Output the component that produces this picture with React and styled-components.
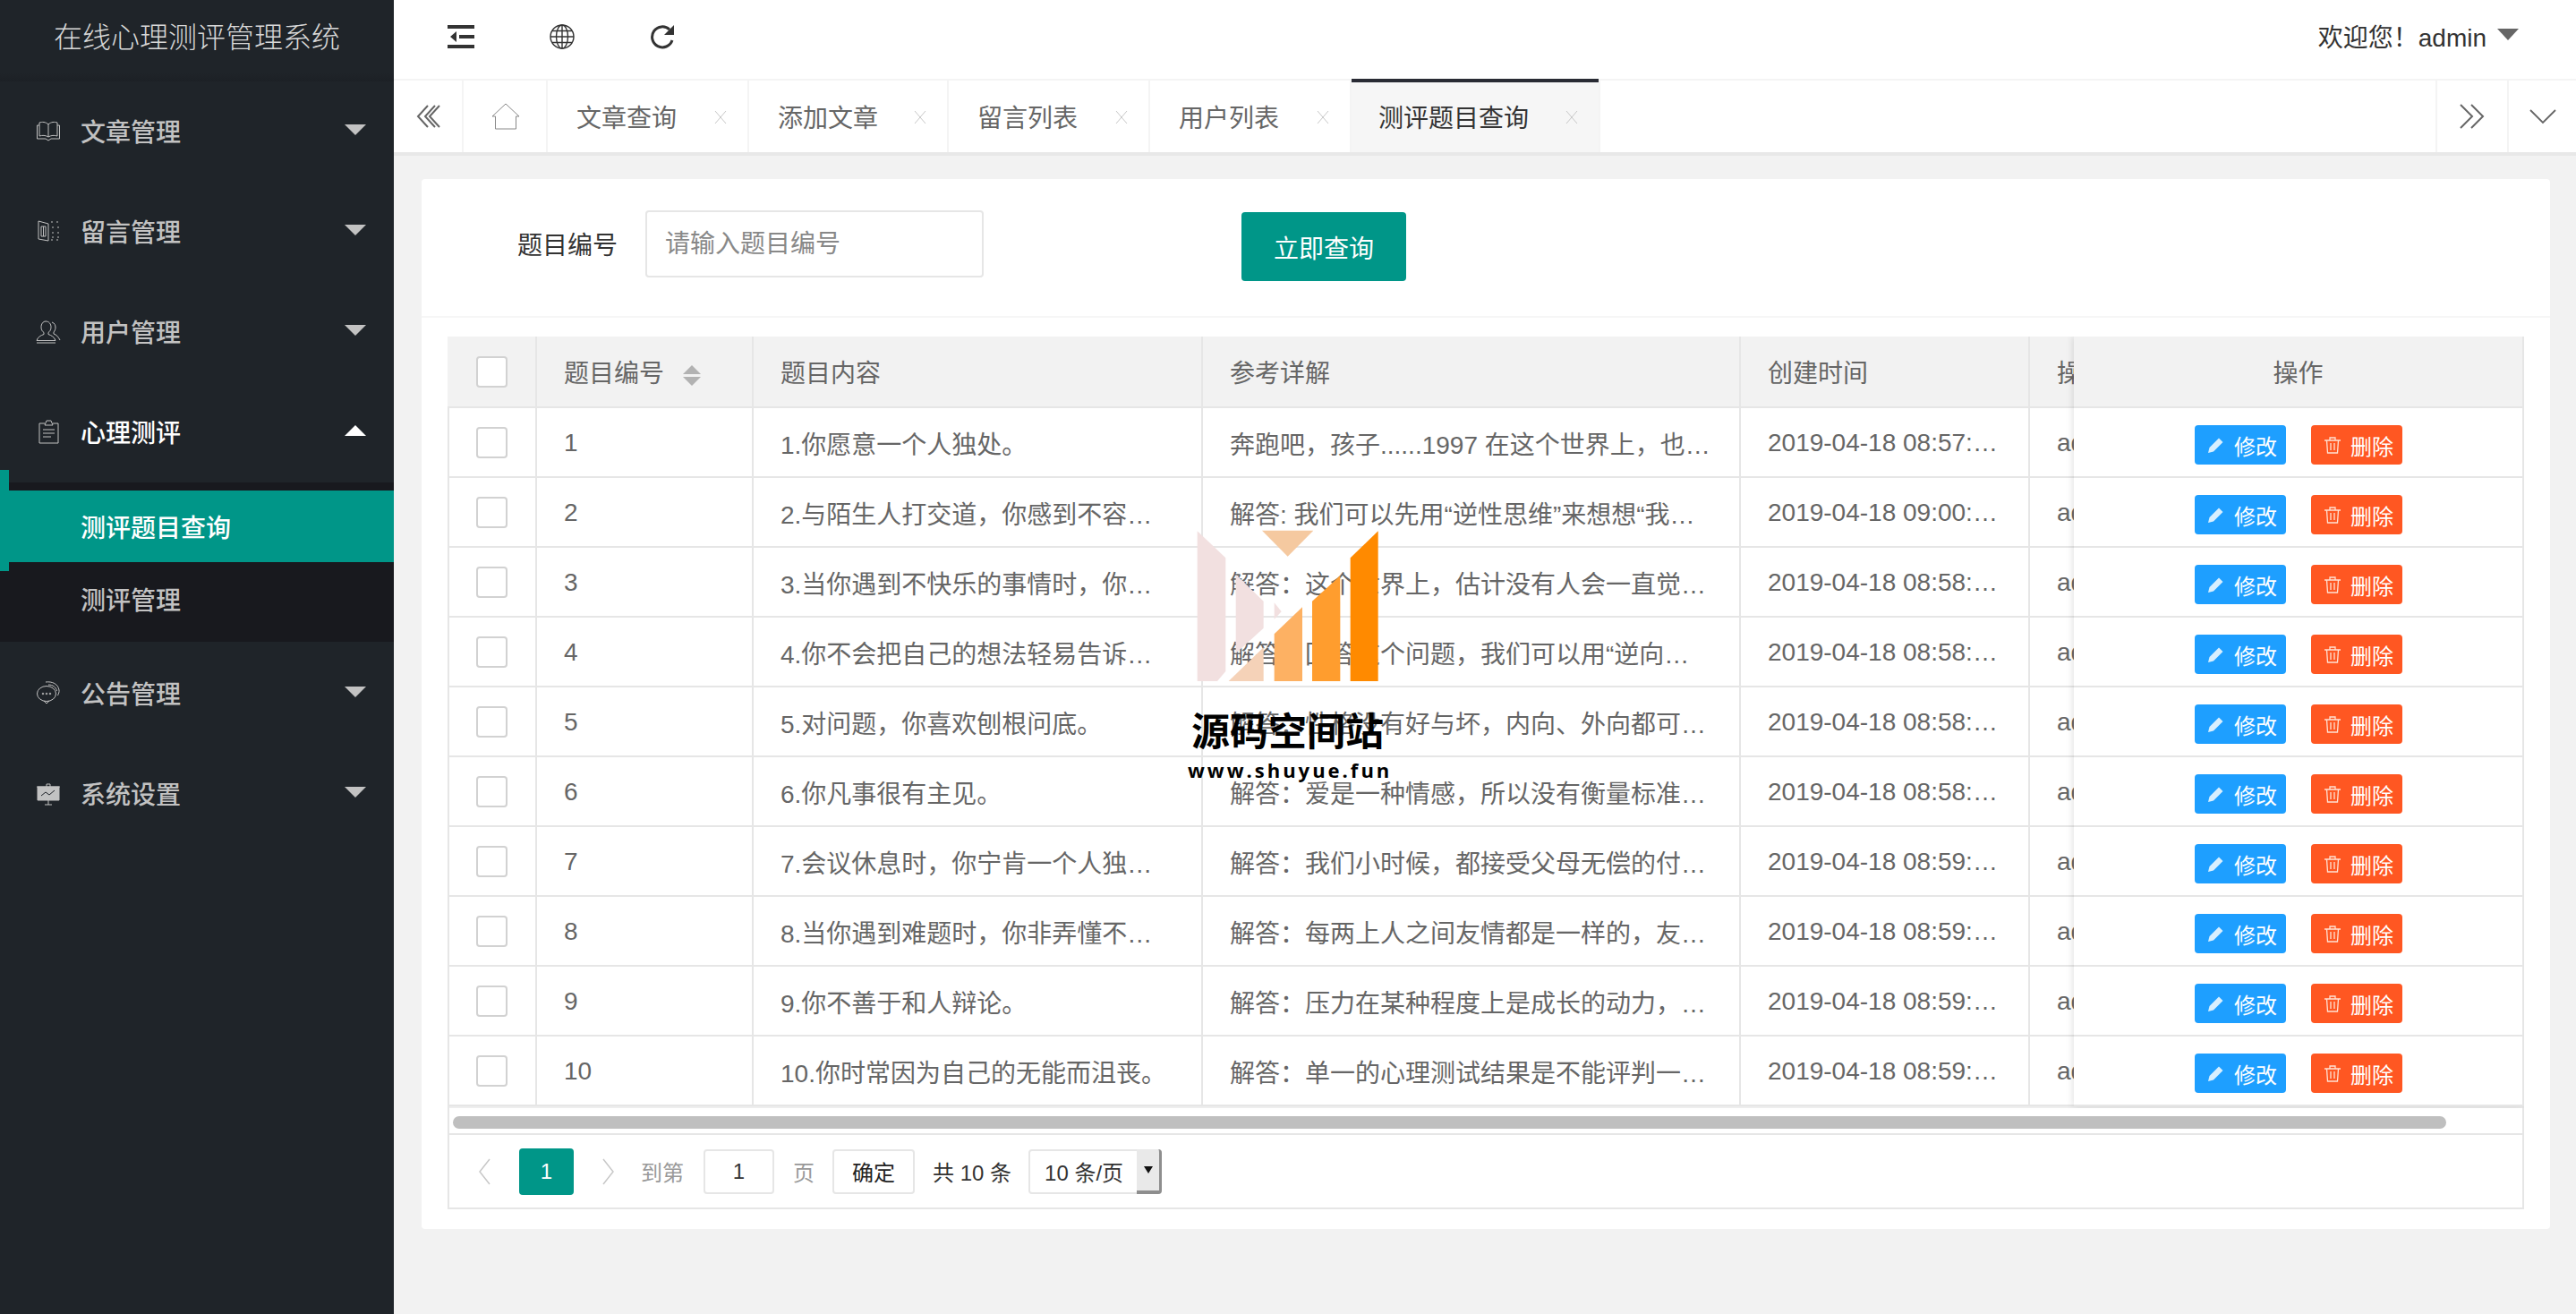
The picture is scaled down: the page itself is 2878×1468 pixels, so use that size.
import React from "react";
import styled, { createGlobalStyle } from "styled-components";

const GlobalStyle = createGlobalStyle`
    html, body {
        margin: 0;
        padding: 0;
        background: #f2f2f2;
    }
    body {
        font-family: "Liberation Sans", "Noto Sans CJK SC", sans-serif;
        font-size: 28px;
        color: #666;
    }
    * {
        box-sizing: border-box;
    }
`;

const Shell = styled.div`
    position: relative;
    display: flex;
    width: 2878px;
    height: 1468px;
    overflow: hidden;
    background: #f2f2f2;
`;

/* sidebar */
const Side = styled.aside`
    flex: 0 0 440px;
    background: #1f2429;
`;

const Logo = styled.div`
    height: 91px;
    padding-bottom: 13px;
    display: flex;
    align-items: center;
    justify-content: center;
    font-size: 32px;
    font-weight: 300;
    color: #d8d8d8;
    background: linear-gradient(#1f2429 90%, #1c2025 100%);
`;

const NavItem = styled.div`
    height: 112px;
    display: flex;
    align-items: center;
    padding: 0 0 2px 40px;
    color: ${(p) => (p.$open ? "#fff" : "#c2c2c2")};
`;

const NavIcon = styled.svg`
    width: 28px;
    height: 28px;
    margin-right: 22px;
    fill: none;
    stroke: #c2c2c2;
    stroke-width: 1;
`;

const NavLabel = styled.span`
    flex: 1;
    font-weight: 500;
`;

const Caret = styled.i`
    width: 0;
    height: 0;
    margin: -2px 31px 0 0;
    border-left: 12px solid transparent;
    border-right: 12px solid transparent;
    border-top: ${(p) => (p.$up ? "0" : "12px solid #c2c2c2")};
    border-bottom: ${(p) => (p.$up ? "12px solid #fff" : "0")};
`;

const SubNav = styled.div`
    position: relative;
    height: 178px;
    margin-bottom: 2px;
    padding-top: 9px;
    background: #18191e;

    &::before {
        content: "";
        position: absolute;
        left: 0;
        top: -14px;
        width: 10px;
        height: 113px;
        background: #009688;
    }
`;

const SubItem = styled.div`
    position: relative;
    height: ${(p) => (p.$active ? "80px" : "84px")};
    padding: 0 0 ${(p) => (p.$active ? "0" : "3px")} 90px;
    display: flex;
    align-items: center;
    font-weight: 500;
    color: ${(p) => (p.$active ? "#fff" : "#c2c2c2")};
    background: ${(p) => (p.$active ? "#009688" : "transparent")};
`;

/* top */
const Main = styled.main`
    flex: 1;
    min-width: 0;
`;

const TopBar = styled.header`
    height: 88px;
    display: flex;
    align-items: center;
    padding: 0 64px 6px 60px;
    background: #fff;
`;

const TopIcon = styled.svg`
    width: ${(p) => p.$w}px;
    height: 28px;
    margin-right: 84px;
    color: #333;
`;

const Welcome = styled.div`
    margin: -3px 0 0 auto;
    display: flex;
    align-items: center;
    color: #333;
`;

const WelcomeCaret = styled.i`
    width: 0;
    height: 0;
    margin-left: 12px;
    margin-top: -3px;
    border-left: 12px solid transparent;
    border-right: 12px solid transparent;
    border-top: 13px solid #666;
`;

const TabBar = styled.nav`
    height: 86px;
    display: flex;
    background: #fff;
    border-top: 2px solid #f4f4f4;
    border-bottom: 4px solid #e8e8e8;
`;

const TabBtn = styled.div`
    flex: 0 0 ${(p) => p.$w}px;
    display: flex;
    align-items: center;
    justify-content: center;
    border-right: 2px solid #f4f4f4;
    color: #666;
`;

const HomeBtn = styled(TabBtn)`
    padding-left: 2px;
`;

const RightBtn = styled(TabBtn)`
    border-right: 0;
    border-left: 2px solid #f4f4f4;
    margin-left: ${(p) => (p.$push ? "auto" : "0")};
`;

const Tab = styled.div`
    position: relative;
    flex: 0 0 ${(p) => p.$w}px;
    display: flex;
    align-items: center;
    padding-left: ${(p) => (p.$active ? "30px" : "32px")};
    border-right: 2px solid #f4f4f4;
    color: ${(p) => (p.$active ? "#333" : "#666")};
    background: ${(p) => (p.$active ? "#f6f6f6" : "#fff")};

    &::before {
        content: "";
        display: ${(p) => (p.$active ? "block" : "none")};
        position: absolute;
        left: 0;
        right: 0;
        top: -2px;
        height: 4px;
        background: #292b34;
    }
`;

const TabClose = styled.svg`
    position: absolute;
    right: 22px;
    top: 33px;
    width: 16px;
    height: 16px;
    stroke: #c8c8c8;
    stroke-width: 1;
    fill: none;
`;

/* card */
const Card = styled.section`
    height: 1173px;
    margin: 26px 29px 0 31px;
    background: #fff;
    border-radius: 4px;
`;

const Filter = styled.form`
    height: 155px;
    display: flex;
    align-items: center;
    padding: 0 0 8px 107px;
    border-bottom: 2px solid #f6f6f6;
`;

const FilterLabel = styled.label`
    width: 143px;
    margin-top: -2px;
    color: #333;
`;

const FilterInput = styled.input`
    width: 378px;
    height: 75px;
    padding: 0 20px;
    border: 2px solid #e6e6e6;
    border-radius: 4px;
    font: inherit;
    color: #666;
    outline: none;

    &::placeholder {
        color: #888;
    }
`;

const SearchButton = styled.button`
    width: 184px;
    height: 77px;
    margin: 6px 0 0 288px;
    border: 0;
    border-radius: 4px;
    font: inherit;
    color: #fff;
    background: #009688;
`;

const TableBox = styled.div`
    position: relative;
    height: 975px;
    margin: 21px 29px 0;
    border: 2px solid #e6e6e6;
    border-top: 0;
`;

const TableClip = styled.div`
    position: relative;
    height: 862px;
    margin: 0 -2px;
    overflow: hidden;
`;

const Table = styled.table`
    width: 2321px;
    table-layout: fixed;
    border-collapse: separate;
    border-spacing: 0;
`;

const Th = styled.th`
    height: 80px;
    padding: 0 ${(p) => (p.$tight ? "0" : "30px")};
    text-align: left;
    font-weight: 400;
    color: #666;
    background: #f2f2f2;
    border-right: 2px solid #e6e6e6;
    border-bottom: 2px solid #e6e6e6;
    white-space: nowrap;
    overflow: hidden;
`;

const Td = styled.td`
    height: 78px;
    padding: 1px ${(p) => (p.$tight ? "0" : "30px")} 0;
    color: #666;
    border-right: 2px solid #e6e6e6;
    border-bottom: 2px solid #e6e6e6;
    white-space: nowrap;
    overflow: hidden;
    text-overflow: ellipsis;
`;

const Check = styled.div`
    width: 35px;
    height: 35px;
    margin-left: 32px;
    background: #fff;
    border: 2px solid #d2d2d2;
    border-radius: 4px;
`;

const Sort = styled.span`
    display: inline-flex;
    flex-direction: column;
    gap: 3px;
    margin-left: 21px;
    vertical-align: middle;

    &::before, &::after {
        content: "";
        width: 0;
        height: 0;
        border-left: 10px solid transparent;
        border-right: 10px solid transparent;
    }
    &::before {
        border-bottom: 10px solid #b2b2b2;
    }
    &::after {
        border-top: 10px solid #b2b2b2;
    }
`;

const FixedCol = styled.div`
    position: absolute;
    top: 0;
    right: 0;
    width: 503px;
    background: #fff;
    box-shadow: -1px 0 8px rgba(0, 0, 0, 0.12);
`;

const FixedHead = styled.div`
    height: 80px;
    display: flex;
    align-items: center;
    justify-content: center;
    background: #f2f2f2;
    border-bottom: 2px solid #e6e6e6;
    border-right: 2px solid #e6e6e6;
`;

const FixedRow = styled.div`
    height: 78px;
    display: flex;
    align-items: center;
    padding: 6px 0 0 135px;
    gap: 28px;
    border-bottom: 2px solid #e6e6e6;
    border-right: 2px solid #e6e6e6;
`;

const RowButton = styled.button`
    width: 102px;
    height: 44px;
    display: flex;
    align-items: center;
    padding: 0 0 0 14px;
    border: 0;
    border-radius: 4px;
    font-family: inherit;
    font-size: 24px;
    color: #fff;
    background: ${(p) => (p.$danger ? "#ff5722" : "#1e9fff")};

    svg {
        flex: none;
        width: 20px;
        height: 20px;
        margin-right: 10px;
    }
`;

const ScrollTrack = styled.div`
    height: 30px;
    padding: 9px 0 0 4px;
    border-top: 2px solid #eee;
    margin-top: -2px;
`;

const ScrollThumb = styled.div`
    width: 2227px;
    height: 14px;
    border-radius: 7px;
    background: #bfbfbf;
`;

const Pager = styled.div`
    height: 83px;
    display: flex;
    align-items: center;
    padding: 0 0 0 30px;
    border-top: 2px solid #e6e6e6;
    font-size: 24px;
    color: #333;
`;

const PagerArrow = styled.svg`
    width: 20px;
    height: 32px;
    fill: none;
    stroke: #c8c8c8;
    stroke-width: 1.5;
`;

const PageNow = styled.div`
    width: 61px;
    height: 52px;
    margin: 0 28px 0 28px;
    display: flex;
    align-items: center;
    justify-content: center;
    border-radius: 4px;
    color: #fff;
    background: #009688;
`;

const PagerText = styled.span`
    color: ${(p) => (p.$dim ? "#999" : "#333")};
    margin: ${(p) => p.$m || "0"};
`;

const PageInput = styled.input`
    width: 79px;
    height: 50px;
    margin-left: 22px;
    border: 2px solid #e6e6e6;
    border-radius: 4px;
    text-align: center;
    font: inherit;
    color: #333;
    outline: none;
`;

const PageGo = styled.button`
    width: 92px;
    height: 50px;
    margin-left: 20px;
    border: 2px solid #e6e6e6;
    border-radius: 4px;
    font: inherit;
    color: #222;
    background: #fff;
`;

const PageSize = styled.div`
    width: 149px;
    height: 50px;
    margin-left: 19px;
    display: flex;
    align-items: center;
    padding-left: 16px;
    position: relative;
    border: 2px solid #e6e6e6;
    border-radius: 4px;
`;

const SizeArrow = styled.div`
    position: absolute;
    right: -2px;
    top: -2px;
    bottom: -2px;
    width: 28px;
    display: flex;
    align-items: center;
    justify-content: center;
    background: #e9e9e9;
    border-right: 3px solid #8e8e8e;
    border-bottom: 4px solid #8e8e8e;
    border-radius: 0 4px 4px 0;

    &::after {
        content: "";
        border-left: 5px solid transparent;
        border-right: 5px solid transparent;
        border-top: 8px solid #111;
    }
`;

/* watermark sits on top of the table */
const Mark = styled.svg`
    position: absolute;
    left: 1280px;
    top: 560px;
    width: 320px;
    height: 240px;
`;

const MarkTitle = styled.div`
    position: absolute;
    left: 1331px;
    top: 785px;
    font-family: "Noto Sans CJK SC", sans-serif;
    font-size: 43px;
    line-height: 58px;
    font-weight: 700;
    color: #000;
    white-space: nowrap;
`;

const MarkUrl = styled.div`
    position: absolute;
    left: 1327px;
    top: 845px;
    font-family: "Open Sans", sans-serif;
    font-size: 22px;
    line-height: 30px;
    font-weight: 700;
    letter-spacing: 3px;
    color: #000;
    white-space: nowrap;
`;

const navIcons = {
    book: (
        <>
            <path d="M14 7C11 4 7 4 4 5v15c3-1 7-1 10 1 3-2 7-2 10-1V5c-3-1-7-1-10 2zM14 7v14" />
            <path d="M4 8H1.500v15H11l3 2 3-2h9.500V8H24" />
        </>
    ),
    door: (
        <>
            <path d="M3 3l11 3v19l-11-2zM6 9h5v11H6zM8.500 9v11" />
            <path d="M17 4h2M23 4h2M17 24h2M23 24h2M19 9v2M19 15v2M19 20v2M25 9v2M25 15v2M25 20v2" />
        </>
    ),
    users: (
        <>
            <path d="M11 3c4 0 6 3 6 6.500 0 3-1.500 5-3 6v2c3 1 7 3 8 7H1c1-4 5-6 8-7v-2c-1.500-1-3-3-3-6C6 6 8 3 11 3z" />
            <path d="M18 4c3 1 4 3 4 6 0 2-1 4-2 5v2c3 1 5 3 7 7M1 27h21" />
        </>
    ),
    clip: (
        <>
            <path d="M10 5H4v22h21V5h-6" />
            <path d="M10 7l2-5h5l2 5zM8 12h13M8 16h13M8 20h9" />
        </>
    ),
    chat: (
        <>
            <ellipse cx="12" cy="15" rx="10.500" ry="8.500" />
            <path d="M9 23l3 3 3-3M11 2c7-1 14 2 15 9 .3 2-.5 4-1.500 6M14 5c5 0 9 3 9.500 7" />
            <circle cx="8" cy="15" r=".8" />
            <circle cx="12" cy="15" r=".8" />
            <circle cx="16" cy="15" r=".8" />
        </>
    ),
    board: (
        <>
            <path fill="#c2c2c2" d="M2 7h24v15H2z" />
            <path d="M1 7h26M14 22v5M10 27h8M12 7V4h4v3" />
            <path stroke="#20242a" d="M6 17l5-4 4 3 6-5" />
        </>
    ),
};

const navTop = [
    { icon: "book", label: "文章管理" },
    { icon: "door", label: "留言管理" },
    { icon: "users", label: "用户管理" },
];

const navBottom = [
    { icon: "chat", label: "公告管理" },
    { icon: "board", label: "系统设置" },
];

const tabs = [
    { label: "文章查询", w: 225 },
    { label: "添加文章", w: 223 },
    { label: "留言列表", w: 225 },
    { label: "用户列表", w: 225 },
    { label: "测评题目查询", w: 278, active: true },
];

const rows = [
    ["1.你愿意一个人独处。", "奔跑吧，孩子......1997 在这个世界上，也许没有人", "08:57:12.0"],
    ["2.与陌生人打交道，你感到不容易吗？", "解答: 我们可以先用“逆性思维”来想想“我们为什么", "09:00:03.0"],
    ["3.当你遇到不快乐的事情时，你会怎么做？", "解答：这个世界上，估计没有人会一直觉得快乐的吧", "08:58:11.0"],
    ["4.你不会把自己的想法轻易告诉别人。", "解答：回答这个问题，我们可以用“逆向思维”来看看", "08:58:24.0"],
    ["5.对问题，你喜欢刨根问底。", "解答：性格没有好与坏，内向、外向都可以有所成就", "08:58:36.0"],
    ["6.你凡事很有主见。", "解答：爱是一种情感，所以没有衡量标准可言，只能", "08:58:49.0"],
    ["7.会议休息时，你宁肯一个人独处。", "解答：我们小时候，都接受父母无偿的付出，长大后", "08:59:02.0"],
    ["8.当你遇到难题时，你非弄懂不可。", "解答：每两上人之间友情都是一样的，友情需要维护", "08:59:15.0"],
    ["9.你不善于和人辩论。", "解答：压力在某种程度上是成长的动力，但也不能太", "08:59:27.0"],
    ["10.你时常因为自己的无能而沮丧。", "解答：单一的心理测试结果是不能评判一个人的全部", "08:59:40.0"],
];

const PencilIcon = () => (
    <svg viewBox="0 0 20 20">
        <path fill="#d8efff" d="M1 19l1.500-6L13 2.500l4.500 4.500L7 17.500z" />
    </svg>
);

const TrashIcon = () => (
    <svg viewBox="0 0 20 20" fill="none" stroke="#ffe2d4" strokeWidth="1.300">
        <path d="M1 5h18M7 5V2h6v3M3.500 5l1 14h11l1-14M8 8v8M12 8v8" />
    </svg>
);

const CloseIcon = () => (
    <TabClose viewBox="0 0 16 16">
        <path d="M2 1l12 14M14 1L2 15" />
    </TabClose>
);

const NavRow = ({ icon, label, open }) => (
    <NavItem $open={open}>
        <NavIcon viewBox="0 0 28 28">{navIcons[icon]}</NavIcon>
        <NavLabel>{label}</NavLabel>
        <Caret $up={open} />
    </NavItem>
);

export default function App() {
    return (
        <>
            <GlobalStyle />
            <Shell>
                <Side>
                    <Logo>在线心理测评管理系统</Logo>
                    {navTop.map((n) => <NavRow key={n.label} {...n} />)}
                    <NavRow icon="clip" label="心理测评" open />
                    <SubNav>
                        <SubItem $active>测评题目查询</SubItem>
                        <SubItem>测评管理</SubItem>
                    </SubNav>
                    {navBottom.map((n) => <NavRow key={n.label} {...n} />)}
                </Side>

                <Main>
                    <TopBar>
                        <TopIcon $w={30} viewBox="0 0 30 28">
                            <path fill="currentColor" d="M0 1h30v4H0zM0 23h30v4H0zM13 12h17v4H13zM10 8v12l-7-6z" />
                        </TopIcon>
                        <TopIcon $w={28} viewBox="0 0 28 28" fill="none" stroke="currentColor" strokeWidth="1.400">
                            <circle cx="14" cy="14" r="13" />
                            <ellipse cx="14" cy="14" rx="6.500" ry="13" />
                            <path d="M14 1v26M1 14h26M3 7.500h22M3 20.500h22" />
                        </TopIcon>
                        <TopIcon $w={29} viewBox="0 0 29 28" fill="none" stroke="currentColor" strokeWidth="3">
                            <path d="M25 18a11.500 11.500 0 1 1-3-12" />
                            <path fill="currentColor" stroke="none" d="M27 1v11H16z" />
                        </TopIcon>
                        <Welcome>
                            欢迎您！admin
                            <WelcomeCaret />
                        </Welcome>
                    </TopBar>

                    <TabBar>
                        <TabBtn $w={78}>
                            <svg width="28" height="28" viewBox="0 0 28 28" fill="none" stroke="#666" strokeWidth="2">
                                <path d="M14 2L3 14l11 12M22 2L11 14l11 12M27 2L16 14l11 12" />
                            </svg>
                        </TabBtn>
                        <HomeBtn $w={94}>
                            <svg width="34" height="30" viewBox="0 0 34 30" fill="none" stroke="#888" strokeWidth="1">
                                <path d="M17 1L2 15h3.500v14h23V15H32z" />
                            </svg>
                        </HomeBtn>
                        {tabs.map((t) => (
                            <Tab key={t.label} $w={t.w} $active={t.active}>
                                {t.label}
                                <CloseIcon />
                            </Tab>
                        ))}
                        <RightBtn $w={80} $push>
                            <svg width="28" height="28" viewBox="0 0 28 28" fill="none" stroke="#666" strokeWidth="2">
                                <path d="M1 1l13 13L1 27M13 1l13 13-13 13" />
                            </svg>
                        </RightBtn>
                        <RightBtn $w={77}>
                            <svg width="30" height="18" viewBox="0 0 30 18" fill="none" stroke="#666" strokeWidth="1.800">
                                <path d="M1 2l14 14L29 2" />
                            </svg>
                        </RightBtn>
                    </TabBar>

                    <Card>
                        <Filter>
                            <FilterLabel>题目编号</FilterLabel>
                            <FilterInput placeholder="请输入题目编号" />
                            <SearchButton type="button">立即查询</SearchButton>
                        </Filter>

                        <TableBox>
                            <TableClip>
                                <Table>
                                    <colgroup>
                                        <col width="100" />
                                        <col width="242" />
                                        <col width="502" />
                                        <col width="601" />
                                        <col width="323" />
                                        <col width="553" />
                                    </colgroup>
                                    <thead>
                                        <tr>
                                            <Th $tight><Check /></Th>
                                            <Th>题目编号<Sort /></Th>
                                            <Th>题目内容</Th>
                                            <Th>参考详解</Th>
                                            <Th>创建时间</Th>
                                            <Th>操作人</Th>
                                        </tr>
                                    </thead>
                                    <tbody>
                                        {rows.map((r, i) => (
                                            <tr key={i}>
                                                <Td $tight><Check /></Td>
                                                <Td>{i + 1}</Td>
                                                <Td>{r[0]}</Td>
                                                <Td>{r[1]}</Td>
                                                <Td>2019-04-18 {r[2]}</Td>
                                                <Td>admin</Td>
                                            </tr>
                                        ))}
                                    </tbody>
                                </Table>
                                <FixedCol>
                                    <FixedHead>操作</FixedHead>
                                    {rows.map((r, i) => (
                                        <FixedRow key={i}>
                                            <RowButton type="button"><PencilIcon />修改</RowButton>
                                            <RowButton type="button" $danger><TrashIcon />删除</RowButton>
                                        </FixedRow>
                                    ))}
                                </FixedCol>
                            </TableClip>
                            <ScrollTrack>
                                <ScrollThumb />
                            </ScrollTrack>
                            <Pager>
                                <PagerArrow viewBox="0 0 20 32"><path d="M15 2L4 16l11 14" /></PagerArrow>
                                <PageNow>1</PageNow>
                                <PagerArrow viewBox="0 0 20 32"><path d="M5 2l11 14L5 30" /></PagerArrow>
                                <PagerText $dim $m="0 0 0 27px">到第</PagerText>
                                <PageInput defaultValue="1" />
                                <PagerText $dim $m="0 0 0 21px">页</PagerText>
                                <PageGo type="button">确定</PageGo>
                                <PagerText $m="0 0 0 20px">共 10 条</PagerText>
                                <PageSize>
                                    10 条/页
                                    <SizeArrow />
                                </PageSize>
                            </Pager>
                        </TableBox>
                    </Card>
                </Main>

                <Mark viewBox="0 0 960 720">
                    <path fill="#f2e0e0" d="M173 100l95 90v380l-28 33h-67zM302 245l93 90v90l-93 85zM431 340l24 30-24 25z" />
                    <path fill="#f5c9a0" d="M390 98h172l-86 87z" />
                    <path fill="#f5d2b8" d="M278 603l117-113v113z" />
                    <path fill="#fdb163" d="M431 445l94-90v248h-94z" />
                    <path fill="#ff9d2e" d="M558 335l94-85v353h-94z" />
                    <path fill="#ff8a00" d="M686 190l93-90v503h-93z" />
                </Mark>
                <MarkTitle>源码空间站</MarkTitle>
                <MarkUrl>www.shuyue.fun</MarkUrl>
            </Shell>
        </>
    );
}
